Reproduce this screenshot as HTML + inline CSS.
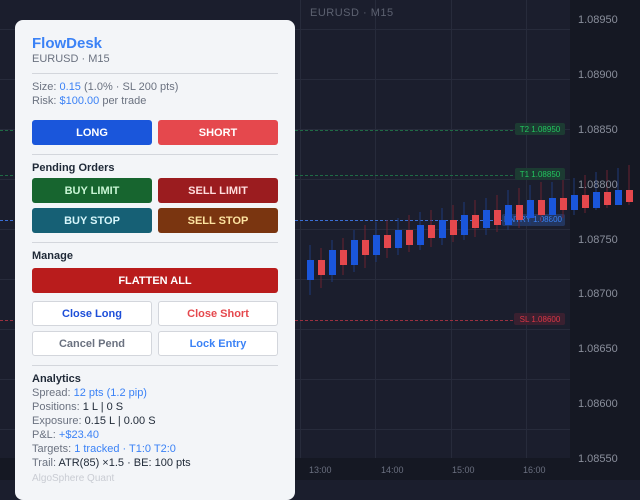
<!DOCTYPE html>
<html><head><meta charset="utf-8"><style>
*{margin:0;padding:0;box-sizing:border-box}
body{width:640px;height:480px;overflow:hidden;background:#1b1e2d;font-family:"Liberation Sans",sans-serif;position:relative}
.ax{position:absolute;font-size:11px;color:#8a8f9c}
#panel{position:absolute;left:15px;top:20px;width:280px;height:480px;background:#f3f5f8;border-radius:8px;padding:0 17px;color:#6b7280;font-size:11px}
.t{position:absolute;left:17px;white-space:nowrap}
.hr{position:absolute;left:17px;width:246px;height:1px;background:#d3d6dc}
.b{position:absolute;height:25px;border-radius:3px;font-size:11px;font-weight:bold;display:flex;align-items:center;justify-content:center;color:#fff}
.l{left:17px;width:120px}.r{left:143px;width:120px}
.w{background:#fff;border:1px solid #d3d6dc}
.v{color:#3b82f6}.k{color:#1f2937}
h4{font-size:11px;color:#1f2937}
</style></head><body>
<svg width="640" height="480" style="position:absolute;left:0;top:0">
<rect x="570" y="0" width="70" height="480" fill="#151823"/>
<rect x="0" y="458" width="570" height="22" fill="#151823"/>
<g stroke="#272b3b" stroke-width="1">
<line x1="0" y1="29.5" x2="570" y2="29.5"/><line x1="0" y1="79.5" x2="570" y2="79.5"/><line x1="0" y1="129.5" x2="570" y2="129.5"/><line x1="0" y1="179.5" x2="570" y2="179.5"/><line x1="0" y1="229.5" x2="570" y2="229.5"/><line x1="0" y1="279.5" x2="570" y2="279.5"/><line x1="0" y1="329.5" x2="570" y2="329.5"/><line x1="0" y1="379.5" x2="570" y2="379.5"/><line x1="0" y1="429.5" x2="570" y2="429.5"/>
<line x1="300.5" y1="0" x2="300.5" y2="458"/><line x1="375.5" y1="0" x2="375.5" y2="458"/><line x1="451.5" y1="0" x2="451.5" y2="458"/><line x1="526.5" y1="0" x2="526.5" y2="458"/>
</g>
<g stroke-dasharray="3,2" stroke-width="1">
<line x1="0" y1="130.5" x2="565" y2="130.5" stroke="#1f6b45"/>
<line x1="0" y1="175.5" x2="565" y2="175.5" stroke="#1f6b45"/>
<line x1="0" y1="220.5" x2="565" y2="220.5" stroke="#3b6fd6"/>
<line x1="0" y1="320.5" x2="565" y2="320.5" stroke="#9b3040"/>
</g>
<rect x="515" y="123" width="50" height="12" rx="2" fill="#1c3b32"/>
<rect x="515" y="168" width="50" height="12" rx="2" fill="#1c3b32"/>
<rect x="502" y="214" width="63" height="12" rx="2" fill="#23365f"/>
<rect x="514" y="313" width="51" height="12" rx="2" fill="#3a2030"/>
<g font-family="Liberation Sans" font-size="8">
<text x="540" y="132" text-anchor="middle" fill="#22c55e">T2 1.08950</text>
<text x="540" y="177" text-anchor="middle" fill="#22c55e">T1 1.08850</text>
<text x="533" y="222" text-anchor="middle" fill="#3b82f6">ENTRY 1.08800</text>
<text x="540" y="322" text-anchor="middle" fill="#dc3545">SL 1.08600</text>
</g>
<g id="c"></g>
<g>
<line x1="310" y1="245" x2="310" y2="295" stroke="#1e3a7a" stroke-width="1"/><rect x="307" y="260" width="7" height="20" fill="#1a56db"/>
<line x1="321" y1="248" x2="321" y2="288" stroke="#6b2230"/><rect x="318" y="260" width="7" height="15" fill="#e5484d"/>
<line x1="332" y1="240" x2="332" y2="282" stroke="#1e3a7a"/><rect x="329" y="250" width="7" height="25" fill="#1a56db"/>
<line x1="343" y1="238" x2="343" y2="275" stroke="#6b2230"/><rect x="340" y="250" width="7" height="15" fill="#e5484d"/>
<line x1="354" y1="230" x2="354" y2="272" stroke="#1e3a7a"/><rect x="351" y="240" width="7" height="25" fill="#1a56db"/>
<line x1="365" y1="225" x2="365" y2="268" stroke="#6b2230"/><rect x="362" y="240" width="7" height="15" fill="#e5484d"/>
<line x1="376" y1="222" x2="376" y2="262" stroke="#1e3a7a"/><rect x="373" y="235" width="7" height="20" fill="#1a56db"/>
<line x1="387" y1="220" x2="387" y2="258" stroke="#6b2230"/><rect x="384" y="235" width="7" height="13" fill="#e5484d"/>
<line x1="398" y1="218" x2="398" y2="255" stroke="#1e3a7a"/><rect x="395" y="230" width="7" height="18" fill="#1a56db"/>
<line x1="409" y1="215" x2="409" y2="252" stroke="#6b2230"/><rect x="406" y="230" width="7" height="15" fill="#e5484d"/>
<line x1="420" y1="212" x2="420" y2="250" stroke="#1e3a7a"/><rect x="417" y="225" width="7" height="20" fill="#1a56db"/>
<line x1="431" y1="210" x2="431" y2="247" stroke="#6b2230"/><rect x="428" y="225" width="7" height="13" fill="#e5484d"/>
<line x1="442" y1="208" x2="442" y2="245" stroke="#1e3a7a"/><rect x="439" y="220" width="7" height="18" fill="#1a56db"/>
<line x1="453" y1="205" x2="453" y2="242" stroke="#6b2230"/><rect x="450" y="220" width="7" height="15" fill="#e5484d"/>
<line x1="464" y1="202" x2="464" y2="240" stroke="#1e3a7a"/><rect x="461" y="215" width="7" height="20" fill="#1a56db"/>
<line x1="475" y1="200" x2="475" y2="237" stroke="#6b2230"/><rect x="472" y="215" width="7" height="13" fill="#e5484d"/>
<line x1="486" y1="198" x2="486" y2="235" stroke="#1e3a7a"/><rect x="483" y="210" width="7" height="18" fill="#1a56db"/>
<line x1="497" y1="195" x2="497" y2="232" stroke="#6b2230"/><rect x="494" y="210" width="7" height="15" fill="#e5484d"/>
<line x1="508" y1="190" x2="508" y2="230" stroke="#1e3a7a"/><rect x="505" y="205" width="7" height="20" fill="#1a56db"/>
<line x1="519" y1="188" x2="519" y2="228" stroke="#6b2230"/><rect x="516" y="205" width="7" height="15" fill="#e5484d"/>
<line x1="530" y1="185" x2="530" y2="225" stroke="#1e3a7a"/><rect x="527" y="200" width="7" height="18" fill="#1a56db"/>
<line x1="541" y1="182" x2="541" y2="222" stroke="#6b2230"/><rect x="538" y="200" width="7" height="15" fill="#e5484d"/>
<line x1="552" y1="182" x2="552" y2="220" stroke="#1e3a7a"/><rect x="549" y="198" width="7" height="17" fill="#1a56db"/>
<line x1="563" y1="180" x2="563" y2="218" stroke="#6b2230"/><rect x="560" y="198" width="7" height="12" fill="#e5484d"/>
<line x1="574" y1="178" x2="574" y2="215" stroke="#1e3a7a"/><rect x="571" y="195" width="7" height="15" fill="#1a56db"/>
<line x1="585" y1="175" x2="585" y2="213" stroke="#6b2230"/><rect x="582" y="195" width="7" height="13" fill="#e5484d"/>
<line x1="596" y1="172" x2="596" y2="210" stroke="#1e3a7a"/><rect x="593" y="192" width="7" height="16" fill="#1a56db"/>
<line x1="607" y1="170" x2="607" y2="208" stroke="#6b2230"/><rect x="604" y="192" width="7" height="13" fill="#e5484d"/>
<line x1="618" y1="168" x2="618" y2="205" stroke="#1e3a7a"/><rect x="615" y="190" width="7" height="15" fill="#1a56db"/>
<line x1="629" y1="165" x2="629" y2="205" stroke="#6b2230"/><rect x="626" y="190" width="7" height="12" fill="#e5484d"/>
</g>
</svg>
<div class="ax" style="left:310px;top:7px;font-size:11px;color:#5c6170;letter-spacing:0.5px">EURUSD · M15</div>
<div class="ax" style="left:578px;top:14px">1.08950</div>
<div class="ax" style="left:578px;top:69px">1.08900</div>
<div class="ax" style="left:578px;top:124px">1.08850</div>
<div class="ax" style="left:578px;top:179px">1.08800</div>
<div class="ax" style="left:578px;top:234px">1.08750</div>
<div class="ax" style="left:578px;top:288px">1.08700</div>
<div class="ax" style="left:578px;top:343px">1.08650</div>
<div class="ax" style="left:578px;top:398px">1.08600</div>
<div class="ax" style="left:578px;top:453px">1.08550</div>
<div class="ax" style="left:309px;top:465px;font-size:9px;color:#6b7080">13:00</div>
<div class="ax" style="left:381px;top:465px;font-size:9px;color:#6b7080">14:00</div>
<div class="ax" style="left:452px;top:465px;font-size:9px;color:#6b7080">15:00</div>
<div class="ax" style="left:523px;top:465px;font-size:9px;color:#6b7080">16:00</div>

<div id="panel">
<div class="t" style="top:15px;font-size:15px;font-weight:bold;color:#3b82f6">FlowDesk</div>
<div class="t" style="top:33px">EURUSD · M15</div>
<div class="hr" style="top:53px"></div>
<div class="t" style="top:61px">Size: <span class="v">0.15</span> (1.0% · SL 200 pts)</div>
<div class="t" style="top:75px">Risk: <span class="v">$100.00</span> per trade</div>
<div class="b l" style="top:100px;background:#1a56db">LONG</div>
<div class="b r" style="top:100px;background:#e5484d">SHORT</div>
<div class="hr" style="top:134px"></div>
<h4 class="t" style="top:142px">Pending Orders</h4>
<div class="b l" style="top:158px;background:#17652f;color:#c8f5d4">BUY LIMIT</div>
<div class="b r" style="top:158px;background:#9b1c1f;color:#fdd">SELL LIMIT</div>
<div class="b l" style="top:188px;background:#166075;color:#d6f6fb">BUY STOP</div>
<div class="b r" style="top:188px;background:#7a3510;color:#fde3a0">SELL STOP</div>
<div class="hr" style="top:222px"></div>
<h4 class="t" style="top:230px">Manage</h4>
<div class="b" style="top:248px;left:17px;width:246px;background:#b91c1c">FLATTEN ALL</div>
<div class="b l w" style="top:281px;color:#1d4ed8">Close Long</div>
<div class="b r w" style="top:281px;color:#e5484d">Close Short</div>
<div class="b l w" style="top:311px;color:#6b7280">Cancel Pend</div>
<div class="b r w" style="top:311px;color:#3b82f6">Lock Entry</div>
<div class="hr" style="top:345px"></div>
<h4 class="t" style="top:353px">Analytics</h4>
<div class="t" style="top:367px">Spread: <span class="v">12 pts (1.2 pip)</span></div>
<div class="t" style="top:381px">Positions: <span class="k">1 L | 0 S</span></div>
<div class="t" style="top:395px">Exposure: <span class="k">0.15 L | 0.00 S</span></div>
<div class="t" style="top:409px">P&amp;L: <span class="v">+$23.40</span></div>
<div class="t" style="top:423px">Targets: <span class="v">1 tracked · T1:0 T2:0</span></div>
<div class="t" style="top:437px">Trail: <span class="k">ATR(85) ×1.5 · BE: 100 pts</span></div>
<div class="t" style="top:453px;color:#c9ccd3;font-size:10px">AlgoSphere Quant</div>
</div>
</body></html>
